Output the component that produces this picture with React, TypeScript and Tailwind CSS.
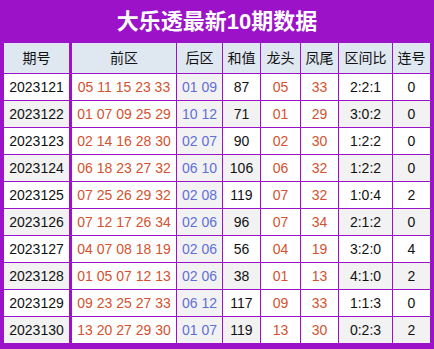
import React from 'react'

const rows = [
  ['2023121', '05 11 15 23 33', '01 09', '87', '05', '33', '2:2:1', '0'],
  ['2023122', '01 07 09 25 29', '10 12', '71', '01', '29', '3:0:2', '0'],
  ['2023123', '02 14 16 28 30', '02 07', '90', '02', '30', '1:2:2', '0'],
  ['2023124', '06 18 23 27 32', '06 10', '106', '06', '32', '1:2:2', '0'],
  ['2023125', '07 25 26 29 32', '02 08', '119', '07', '32', '1:0:4', '2'],
  ['2023126', '07 12 17 26 34', '02 06', '96', '07', '34', '2:1:2', '0'],
  ['2023127', '04 07 08 18 19', '02 06', '56', '04', '19', '3:2:0', '4'],
  ['2023128', '01 05 07 12 13', '02 06', '38', '01', '13', '4:1:0', '2'],
  ['2023129', '09 23 25 27 33', '06 12', '117', '09', '33', '1:1:3', '0'],
  ['2023130', '13 20 27 29 30', '01 07', '119', '13', '30', '0:2:3', '2'],
]

const heads = ['期号', '前区', '后区', '和值', '龙头', '凤尾', '区间比', '连号']

export default function App() {
  return (
    <div
      className="w-[434px] h-[349px] bg-[#9b12c8] flex flex-col"
      style={{ fontFamily: '"Liberation Sans", "Noto Sans CJK SC", sans-serif' }}
    >
      <div className="h-[43px] flex items-center justify-center text-white font-bold text-[22px] leading-none">
        大乐透最新10期数据
      </div>
      <div className="pl-[4px] pb-[6px]">
        <div className="grid grid-cols-[67px_104px_45px_37px_39px_37px_53px_37px] gap-px text-[14px] text-[#111]">
          {heads.map((h, i) => (
            <div
              key={h}
              className={`h-[30px] flex items-center justify-center bg-[#dfe7f1] ${i === 0 ? 'border-r-2 border-[#9b12c8]' : ''}`}
            >
              {h}
            </div>
          ))}
          {rows.map((r, ri) => {
            const even = ri % 2 === 1
            const stripe = even ? 'bg-[#f2f2f2]' : 'bg-white'
            return r.map((c, ci) => {
              let cls = stripe + ' text-[#111]'
              if (ci === 1 || ci === 4 || ci === 5) cls = 'bg-white text-[#d4522f]'
              if (ci === 2) cls = 'bg-[#f2f2f2] text-[#5f6fd6]'
              return (
                <div
                  key={ri + '-' + ci}
                  className={`h-[26px] flex items-center justify-center ${cls} ${ci === 0 ? 'border-r-2 border-[#9b12c8]' : ''}`}
                >
                  {c}
                </div>
              )
            })
          })}
        </div>
      </div>
    </div>
  )
}
